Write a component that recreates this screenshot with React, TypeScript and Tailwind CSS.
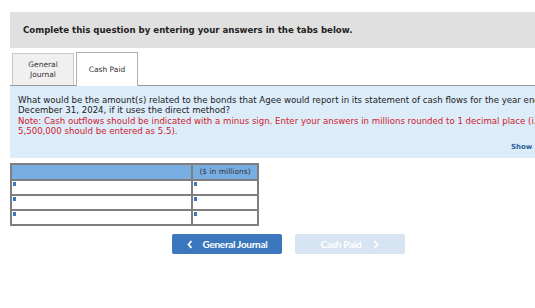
import React from 'react';

// Question panel with tabs, answer table and navigation buttons

const ROWS = [0, 1, 2];

const CellMark = () => (
  <span className="absolute left-[1px] top-[1px] w-[3px] h-[4px] bg-[#3a77bd]" />
);

const Chevron = ({ dir }: { dir: 'left' | 'right' }) => (
  <svg width="6" height="9" viewBox="0 0 6 9" className="shrink-0">
    <path
      d={dir === 'left' ? 'M4.5 1 L1.5 4.5 L4.5 8' : 'M1.5 1 L4.5 4.5 L1.5 8'}
      fill="none"
      stroke="white"
      strokeWidth="1.8"
    />
  </svg>
);

export default function App() {
  return (
    <div className="w-[535px] h-[308px] bg-white overflow-hidden pt-[12px] pl-[10px]" style={{ fontFamily: '"DejaVu Sans", Verdana, sans-serif' }}>
      <div className="h-[36px] bg-[#e0e0e0] flex items-center pl-[13px] w-[540px]">
        <span className="text-[8.6px] font-bold text-[#222]">
          Complete this question by entering your answers in the tabs below.
        </span>
      </div>

      <div className="flex items-end h-[38px] w-[540px] border-b border-[#9a9a9a] pl-[2px]">
        <div className="w-[62px] h-[32px] bg-[#f0f0f0] border border-b-0 border-[#c8c8c8] flex items-center justify-center text-center text-[7.5px] leading-[10px] text-[#333]">
          General<br />Journal
        </div>
        <div className="ml-[2px] w-[62px] h-[34px] -mb-px bg-white border border-b-0 border-[#b0b0b0] flex items-center justify-center text-[7.5px] text-[#333]">
          Cash Paid
        </div>
        <div className="flex-1" />
      </div>

      <div className="w-[540px] h-[72px] bg-[#dcecf9] pl-[8px] pt-[9px] text-[8.6px] leading-[10.3px] whitespace-nowrap relative">
        <div className="text-[#222]">
          What would be the amount(s) related to the bonds that Agee would report in its statement of cash flows for the year ended
        </div>
        <div className="text-[#222]">December 31, 2024, if it uses the direct method?</div>
        <div className="text-[#d0202a]">
          Note: Cash outflows should be indicated with a minus sign. Enter your answers in millions rounded to 1 decimal place (i.e.,
        </div>
        <div className="text-[#d0202a]">5,500,000 should be entered as 5.5).</div>
        <div className="absolute left-[501px] top-[56px] text-[7px] font-bold text-[#2f5f96]">Show</div>
      </div>

      <table className="mt-[5px] border-collapse border-2 border-[#7f7f7f] w-[249px]">
        <thead>
          <tr className="h-[16px]">
            <th className="w-[181px] bg-[#79aee3] border-2 border-[#7f7f7f]" />
            <th className="bg-[#79aee3] border-2 border-[#7f7f7f] text-[7.5px] font-normal text-[#333] leading-[12px] text-center">
              ($ in millions)
            </th>
          </tr>
        </thead>
        <tbody>
          {ROWS.map((r) => (
            <tr key={r} className="h-[15px]">
              <td className="relative bg-white border-2 border-[#7f7f7f] p-0">
                <CellMark />
              </td>
              <td className="relative bg-white border-2 border-[#7f7f7f] p-0">
                <CellMark />
              </td>
            </tr>
          ))}
        </tbody>
      </table>

      <div className="flex gap-[13px] mt-[8px] ml-[162px]" style={{ fontFamily: 'Lato, "Open Sans", sans-serif' }}>
        <div className="w-[110px] h-[20px] bg-[#3a77bd] rounded-[2px] flex items-center justify-center gap-[10px] text-white text-[10px] font-bold tracking-[-0.3px]">
          <Chevron dir="left" />
          <span>General Journal</span>
        </div>
        <div className="w-[110px] h-[20px] bg-[#d7e4f2] rounded-[2px] flex items-center justify-center gap-[12px] text-white text-[10px] font-bold tracking-[-0.3px]">
          <span>Cash Paid</span>
          <Chevron dir="right" />
        </div>
      </div>
    </div>
  );
}
